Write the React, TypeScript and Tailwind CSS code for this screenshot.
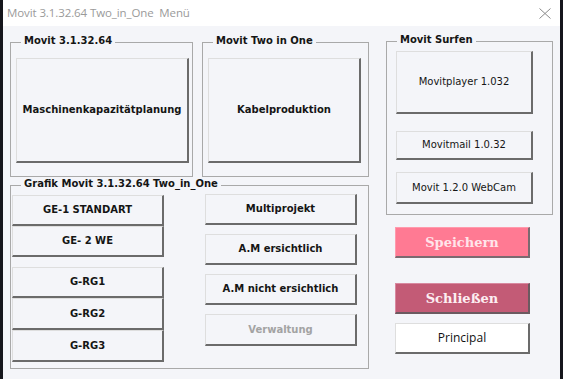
import React from "react";

const btnBase =
  "flex items-center justify-center bg-[#f4f5f9] border-t border-l border-t-[#dedede] border-l-[#dedede] border-r-2 border-b-2 border-r-[#6b6b6b] border-b-[#6b6b6b]";

function Btn({
  className = "",
  children,
  bold = true,
  muted = false,
}: {
  className?: string;
  children: React.ReactNode;
  bold?: boolean;
  muted?: boolean;
}) {
  return (
    <div className={`${btnBase} ${className}`}>
      <span
        className={`font-['DejaVu_Sans',sans-serif] text-[10px] leading-none ${
          bold ? "font-bold" : "font-normal"
        } ${muted ? "text-[#a3a3a3]" : "text-[#151515]"}`}
      >
        {children}
      </span>
    </div>
  );
}

function Group({
  label,
  className = "",
  children,
}: {
  label: string;
  className?: string;
  children: React.ReactNode;
}) {
  return (
    <div className={`relative border border-[#a9a9a9] ${className}`}>
      <span className="absolute top-[-9px] left-[10px] px-[3px] bg-[#f4f5f9] font-['DejaVu_Sans',sans-serif] text-[10px] font-bold leading-[14px] text-[#151515] whitespace-nowrap">
        {label}
      </span>
      {children}
    </div>
  );
}

export default function App() {
  return (
    <div className="w-[563px] h-[379px] flex bg-[#1b1b22] overflow-hidden">
      <div className="w-[3px] shrink-0 bg-[#15161c]" />
      <div className="flex-1 flex flex-col bg-[#f4f5f9]">
        {/* title bar */}
        <div className="h-[26px] bg-white flex items-center justify-between pl-[4px] pr-[9px]">
          <span className="font-['Open_Sans',sans-serif] text-[11.5px] text-[#9a9a9a] tracking-[-0.1px] leading-none">
            Movit 3.1.32.64 Two_in_One&nbsp; Menü
          </span>
          <svg width="12" height="11" viewBox="0 0 12 11" className="mt-[1px]">
            <path d="M0.5 0.5 L11.5 10.5 M11.5 0.5 L0.5 10.5" stroke="#8a8a8a" strokeWidth="1" fill="none" />
          </svg>
        </div>

        {/* body */}
        <div className="flex pl-[7px] pt-[15px]">
          {/* left column */}
          <div className="flex flex-col w-[359px]">
            <div className="flex gap-[9px] pt-[1px]">
              <Group label="Movit 3.1.32.64" className="w-[183px] h-[135px] pt-[15px] pl-[5px]">
                <Btn className="w-[173px] h-[105px]">Maschinenkapazitätplanung</Btn>
              </Group>
              <Group label="Movit Two in One" className="w-[167px] h-[135px] pt-[15px] pl-[5px]">
                <Btn className="w-[153px] h-[105px]">Kabelproduktion</Btn>
              </Group>
            </div>
            <Group
              label="Grafik Movit 3.1.32.64 Two_in_One"
              className="mt-[8px] w-[359px] h-[184px] flex pl-[1px] pt-[9px]"
            >
              <div className="flex flex-col w-[152px]">
                <Btn className="h-[31px]">GE-1 STANDART</Btn>
                <Btn className="h-[31px]">GE- 2 WE</Btn>
                <Btn className="h-[31px] mt-[10px]">G-RG1</Btn>
                <Btn className="h-[32px]">G-RG2</Btn>
                <Btn className="h-[32px]">G-RG3</Btn>
              </div>
              <div className="flex flex-col gap-[9px] w-[152px] ml-[41px] -mt-[1px]">
                <Btn className="h-[31px]">Multiprojekt</Btn>
                <Btn className="h-[31px]">A.M ersichtlich</Btn>
                <Btn className="h-[31px]">A.M nicht ersichtlich</Btn>
                <Btn className="h-[32px]" muted>
                  Verwaltung
                </Btn>
              </div>
            </Group>
          </div>

          {/* right column */}
          <div className="flex flex-col ml-[17px] w-[167px]">
            <Group label="Movit Surfen" className="w-[167px] h-[174px] flex flex-col pl-[9px] pt-[9px]">
              <Btn bold={false} className="w-[137px] h-[63px]">
                Movitplayer 1.032
              </Btn>
              <Btn bold={false} className="w-[137px] h-[29px] mt-[17px]">
                Movitmail 1.0.32
              </Btn>
              <Btn bold={false} className="w-[137px] h-[32px] mt-[12px]">
                Movit 1.2.0 WebCam
              </Btn>
            </Group>
            <div className="flex flex-col pl-[9px]">
              <div className="mt-[12px] w-[135px] h-[31px] flex items-center justify-center bg-[#ff7a93] border-t border-l border-t-[#ff9aad] border-l-[#ff9aad] border-r-2 border-b-2 border-r-[#7a6a70] border-b-[#7a6a70]">
                <span className="font-['DejaVu_Serif',serif] font-bold text-[13px] leading-none text-[#ffe4ea]">
                  Speichern
                </span>
              </div>
              <div className="mt-[25px] w-[135px] h-[31px] flex items-center justify-center bg-[#c35b76] border-t border-l border-t-[#d889a0] border-l-[#d889a0] border-r-2 border-b-2 border-r-[#6b5a60] border-b-[#6b5a60]">
                <span className="font-['DejaVu_Serif',serif] font-bold text-[13px] leading-none text-[#fdeef2]">
                  Schließen
                </span>
              </div>
              <div className="mt-[9px] w-[135px] h-[31px] flex items-center justify-center bg-white border-t border-l border-t-[#dedede] border-l-[#dedede] border-r-2 border-b-2 border-r-[#6b6b6b] border-b-[#6b6b6b]">
                <span className="font-['Open_Sans',sans-serif] text-[12px] leading-none text-[#111]">
                  Principal
                </span>
              </div>
            </div>
          </div>
        </div>
      </div>
      <div className="w-[3px] shrink-0 bg-[#15161c]" />
    </div>
  );
}
